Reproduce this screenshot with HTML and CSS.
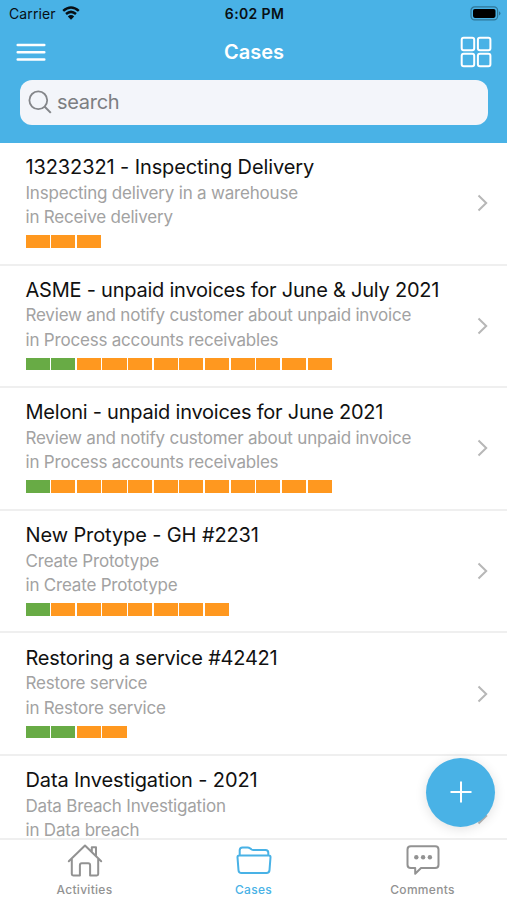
FILE: index.html
```html
<!DOCTYPE html>
<html lang="en">
<head>
<meta charset="utf-8">
<title>Cases</title>
<link rel="stylesheet" href="styles.css">
</head>
<body>
<div class="app">
<header class="header">
  <div class="status">
    <div class="carrier"><span>Carrier</span>
      <svg width="18" height="14" viewBox="0 0 18 14"><path d="M1.2 4.9Q9-1.9 16.8 4.9M4 8Q9 3.7 14 8" fill="none" stroke="#080f14" stroke-width="2.5"/><path d="M5.8 10.4Q9 7.6 12.2 10.4L9 13.7Z" fill="#080f14"/></svg>
    </div>
    <div class="time">6:02 PM</div>
    <svg class="battery" width="31" height="15" viewBox="0 0 31 15"><rect x="1" y=".9" width="26.6" height="13" rx="3.6" fill="none" stroke="#2f7697" stroke-width="1.2"/><rect x="3" y="2.9" width="22.5" height="9" rx="1.8" fill="#000"/><path d="M29 5.2q3 2.2 0 4.4z" fill="#2f7697"/></svg>
  </div>
  <div class="navbar">
    <svg width="30" height="20" viewBox="0 0 30 20"><path d="M1.7 3.1H28.3M1.7 10.3H28.3M1.7 17.5H28.3" stroke="#fff" stroke-width="2.5" stroke-linecap="round"/></svg>
    <h1>Cases</h1>
    <svg width="32" height="32" viewBox="0 0 32 32" fill="none" stroke="#fff" stroke-width="2"><rect x="1.7" y="1.7" width="12.5" height="12.5" rx="2"/><rect x="17.9" y="1.7" width="12.5" height="12.5" rx="2"/><rect x="1.7" y="17.8" width="12.5" height="12.5" rx="2"/><rect x="17.9" y="17.8" width="12.5" height="12.5" rx="2"/></svg>
  </div>
  <div class="search">
    <svg width="24" height="24" viewBox="0 0 24 24" fill="none" stroke="#84868a" stroke-width="1.8"><circle cx="10.3" cy="10.3" r="8.9"/><path d="M16.5 16.5L22.8 22.9" stroke-width="2"/></svg>
    <span>search</span>
  </div>
</header>
<main class="list">
  <article class="case"><div class="info"><h2 class="loose">13232321 - Inspecting Delivery</h2><p>Inspecting delivery in a warehouse</p><p>in Receive delivery</p><div class="progress"><i></i><i></i><i></i></div></div><svg class="chevron" width="12" height="18" viewBox="0 0 12 18"><path d="M1.5 1.5L9.2 9L1.5 16.5"/></svg></article>
  <article class="case"><div class="info"><h2>ASME - unpaid invoices for June &amp; July 2021</h2><p>Review and notify customer about unpaid invoice</p><p>in Process accounts receivables</p><div class="progress"><i class="done"></i><i class="done"></i><i></i><i></i><i></i><i></i><i></i><i></i><i></i><i></i><i></i><i></i></div></div><svg class="chevron" width="12" height="18" viewBox="0 0 12 18"><path d="M1.5 1.5L9.2 9L1.5 16.5"/></svg></article>
  <article class="case"><div class="info"><h2>Meloni - unpaid invoices for June 2021</h2><p>Review and notify customer about unpaid invoice</p><p>in Process accounts receivables</p><div class="progress"><i class="done"></i><i></i><i></i><i></i><i></i><i></i><i></i><i></i><i></i><i></i><i></i><i></i></div></div><svg class="chevron" width="12" height="18" viewBox="0 0 12 18"><path d="M1.5 1.5L9.2 9L1.5 16.5"/></svg></article>
  <article class="case"><div class="info"><h2 class="loose">New Protype - GH #2231</h2><p>Create Prototype</p><p>in Create Prototype</p><div class="progress"><i class="done"></i><i></i><i></i><i></i><i></i><i></i><i></i><i></i></div></div><svg class="chevron" width="12" height="18" viewBox="0 0 12 18"><path d="M1.5 1.5L9.2 9L1.5 16.5"/></svg></article>
  <article class="case"><div class="info"><h2>Restoring a service #42421</h2><p>Restore service</p><p>in Restore service</p><div class="progress"><i class="done"></i><i class="done"></i><i></i><i></i></div></div><svg class="chevron" width="12" height="18" viewBox="0 0 12 18"><path d="M1.5 1.5L9.2 9L1.5 16.5"/></svg></article>
  <article class="case"><div class="info"><h2 class="loose">Data Investigation - 2021</h2><p>Data Breach Investigation</p><p>in Data breach</p></div><svg class="chevron" width="12" height="18" viewBox="0 0 12 18"><path d="M1.5 1.5L9.2 9L1.5 16.5"/></svg></article>
</main>
<div class="fab"><svg width="22" height="22" viewBox="0 0 22 22"><path d="M11 .5V21.5M.5 11H21.5" stroke="#fff" stroke-width="2"/></svg></div>
<nav class="tabs">
  <div class="tab"><svg width="36" height="34" viewBox="0 0 36 34"><path d="M1.8 17.2L18 1.5L34.2 17.2M4.8 14.8V30Q4.8 31.4 6.2 31.4H12.9V21.2Q12.9 19.3 14.8 19.3H21.2Q23.1 19.3 23.1 21.2V31.4H29.8Q31.2 31.4 31.2 30V14.8M24.8 7.6V3.2H29V11.8"/></svg><span>Activities</span></div>
  <div class="tab active"><svg width="36" height="34" viewBox="0 0 36 34"><path d="M3.7 11.5V6.2Q3.7 3.4 6.5 3.4H11.5Q13 3.4 14.2 4.4L15.6 5.5Q16.4 6.1 17.4 6.1H29.5Q32.3 6.1 32.3 8.8V11.5M3.2 11.5H32.8Q34.6 11.5 34.5 13.3L33.5 26.2Q33.3 29 30.5 29H5.5Q2.7 29 2.5 26.2L1.5 13.3Q1.4 11.5 3.2 11.5Z"/></svg><span>Cases</span></div>
  <div class="tab"><svg width="36" height="34" viewBox="0 0 36 34"><path d="M5.8 2.2H30.2Q33.5 2.2 33.5 5.5V20.7Q33.5 24 30.2 24H16L10.2 29.8V24H5.8Q2.5 24 2.5 20.7V5.5Q2.5 2.2 5.8 2.2Z"/><g fill="#929292" stroke="none"><circle cx="11.3" cy="13.2" r="2.2"/><circle cx="18.1" cy="13.2" r="2.2"/><circle cx="24.9" cy="13.2" r="2.2"/></g></svg><span>Comments</span></div>
</nav>
</div>
</body>
</html>
```
FILE: styles.css
```css
* { box-sizing: border-box; margin: 0; padding: 0; }
body { font-family: Inter, "Liberation Sans", sans-serif; background: #fff; }
svg { display: block; flex: none; }
.app { position: relative; width: 507px; height: 900px; display: flex; flex-direction: column; overflow: hidden; }
.header { flex: none; height: 143px; background: #49b2e6; }
.status { height: 27px; padding: 0 5px 0 9px; display: grid; grid-template-columns: 1fr auto 1fr; align-items: center; color: #080f14; font-size: 14px; line-height: 27px; }
.carrier { display: flex; align-items: center; gap: 6px; letter-spacing: .1px; }
.carrier svg { margin-top: -2px; }
.time { font-weight: 600; letter-spacing: .35px; position: relative; left: -1px; }
.battery { justify-self: end; margin-right: 1px; margin-top: -1px; }
.navbar { height: 50px; padding: 0 15px 0 16px; display: grid; grid-template-columns: 1fr auto 1fr; align-items: center; }
.navbar svg:last-child { justify-self: end; }
.navbar h1 { color: #fff; font-size: 20px; font-weight: 600; }
.search { margin: 3px 19.5px 0 20px; height: 44.5px; border-radius: 12px; background: #f3f5fa; display: flex; align-items: center; gap: 5px; padding-left: 8px; color: #7c7e82; font-size: 20px; letter-spacing: -.3px; }
.list { flex: 1; min-height: 0; overflow: hidden; }
.case { height: 122.6px; border-bottom: 2px solid #efefef; display: flex; align-items: center; justify-content: space-between; padding: 0 18px 0 25.5px; }
.info { align-self: flex-start; padding-top: 11.3px; white-space: nowrap; }
.info h2 { font-size: 20px; line-height: 26.5px; font-weight: 400; color: #111; letter-spacing: -.23px; }
.info h2.loose { letter-spacing: -.11px; }
.info p { font-size: 17px; line-height: 24.5px; color: #a2a2a2; letter-spacing: -.2px; }
.progress { display: flex; gap: 1.5px; margin-top: 5.5px; }
.progress i { width: 24.15px; height: 12.5px; background: #ff981f; }
.progress .done { background: #68ab45; }
.chevron { fill: none; stroke: #b7b7b7; stroke-width: 2; }
.fab { position: absolute; left: 426px; top: 757.5px; width: 69px; height: 69px; border-radius: 50%; background: #49b2e6; display: flex; align-items: center; justify-content: center; box-shadow: 0 2px 12px rgba(0,0,0,.12); }
.tabs { flex: none; height: 62px; border-top: 2px solid #efefef; background: #fff; display: grid; grid-template-columns: repeat(3, 1fr); }
.tab { display: flex; flex-direction: column; align-items: center; padding-top: 4px; color: #929292; font-size: 12px; line-height: 16px; font-weight: 500; letter-spacing: .3px; }
.tab svg { fill: none; stroke: currentColor; stroke-width: 2; stroke-linejoin: round; stroke-linecap: round; }
.tab span { margin-top: 4px; }
.active { color: #49b2e6; }
```
